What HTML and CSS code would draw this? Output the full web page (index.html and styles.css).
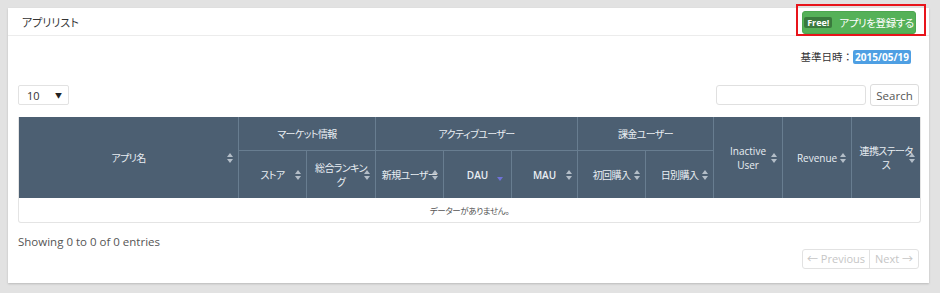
FILE: index.html
```html
<!DOCTYPE html>
<html>
  <head>
    <meta charset="UTF-8" />
    <title>アプリリスト</title>
    <link rel="stylesheet" href="styles.css">
  </head>
  <body>
    <div class="panel">
      <div class="panel_head">
        <span class="panel_title">アプリリスト</span>
        <button class="add_btn"><span class="free_badge">Free!</span><span class="jp">アプリを登録する</span></button>
        <span class="mark_box"></span>
      </div>

      <div class="panel_body">
        <div class="date_row">
          基準日時：<span class="date_label">2015/05/19</span>
        </div>

        <div class="controls">
          <div class="length_select"><span>10</span><span class="caret">▼</span></div>
          <div class="search_box">
            <input class="search_input" type="text" />
            <button class="search_btn">Search</button>
          </div>
        </div>

        <table class="app_table">
          <colgroup>
            <col style="width: 220px" />
            <col style="width: 68px" />
            <col style="width: 69px" />
            <col style="width: 68px" />
            <col style="width: 68px" />
            <col style="width: 66px" />
            <col style="width: 68px" />
            <col style="width: 68px" />
            <col style="width: 69px" />
            <col style="width: 69px" />
            <col style="width: 68px" />
          </colgroup>
          <thead>
            <tr class="row_top">
              <th rowspan="2" class="sort jp">アプリ名</th>
              <th colspan="2" class="group jp">マーケット情報</th>
              <th colspan="3" class="group jp">アクティブユーザー</th>
              <th colspan="2" class="group jp">課金ユーザー</th>
              <th rowspan="2" class="sort">Inactive<br />User</th>
              <th rowspan="2" class="sort">Revenue</th>
              <th rowspan="2" class="sort jp last">連携ステータ<br />ス</th>
            </tr>
            <tr class="row_sub">
              <th class="sort jp">ストア</th>
              <th class="sort jp">総合ランキン<br />グ</th>
              <th class="sort jp">新規ユーザー</th>
              <th class="sort_desc">DAU</th>
              <th class="sort">MAU</th>
              <th class="sort jp">初回購入</th>
              <th class="sort jp">日別購入</th>
            </tr>
          </thead>
          <tbody>
            <tr>
              <td colspan="11" class="empty jp">データーがありません。</td>
            </tr>
          </tbody>
        </table>

        <div class="table_foot">
          <div class="info">Showing 0 to 0 of 0 entries</div>
          <div class="pager">
            <span class="page_btn prev">← Previous</span>
            <span class="page_btn next">Next →</span>
          </div>
        </div>
      </div>
    </div>
  </body>
</html>
```

FILE: styles.css
```css
body {
  margin: 0;
  background: #e2e2e2;
  font-family: "Open Sans", "Noto Sans CJK JP", sans-serif;
  color: #333;
  height: 293px;
  overflow: hidden;
}

/* Japanese text: proportional kana, a little tighter */
.jp {
  font-feature-settings: "palt";
  letter-spacing: -0.4px;
}

.panel {
  margin: 8px 0 0 8px;
  width: 921px;
  height: 275px;
  background: #fff;
  box-shadow: 0 1px 2px rgba(0, 0, 0, 0.18);
  box-sizing: border-box;
}

.panel_head {
  position: relative;
  height: 28px;
  border-bottom: 1px solid #ececec;
  display: flex;
  justify-content: space-between;
  align-items: center;
  padding: 0 13px 0 14px;
  box-sizing: border-box;
}

.panel_title {
  font-size: 11px;
  color: #333;
  font-feature-settings: "palt";
}

.add_btn {
  width: 114px;
  height: 23px;
  margin-top: 1px;
  background: #55b158;
  border: 1px solid #4ca64f;
  border-radius: 3px;
  color: #fff;
  font-family: "Open Sans", "Noto Sans CJK JP", sans-serif;
  font-size: 10.5px;
  white-space: nowrap;
  display: flex;
  align-items: center;
  justify-content: center;
  gap: 7px;
  padding: 0;
}

.free_badge {
  background: #3a7a3d;
  color: #fff;
  font-weight: 700;
  font-size: 9px;
  padding: 0 3px;
  line-height: 11px;
  border-radius: 2px;
}

/* red annotation frame around the register button */
.mark_box {
  position: absolute;
  right: 3px;
  top: -4px;
  width: 130px;
  height: 32px;
  border: 2px solid #e8141b;
  box-sizing: border-box;
}

.panel_body {
  padding: 0 10px;
}

.date_row {
  text-align: right;
  padding: 15px 8px 0 0;
  font-size: 10.5px;
  line-height: 13px;
  height: 13px;
}

.date_label {
  background: #4e9fe3;
  color: #fff;
  font-weight: 700;
  font-size: 10px;
  padding: 0 2px;
  border-radius: 2px;
}

.controls {
  margin-top: 20px;
  display: flex;
  justify-content: space-between;
  align-items: center;
  height: 22px;
}

.length_select {
  width: 51px;
  height: 20px;
  border: 1px solid #e2e2e2;
  border-radius: 2px;
  box-sizing: border-box;
  display: flex;
  justify-content: space-between;
  align-items: center;
  padding: 0 6px 0 8px;
  font-size: 11px;
}

.caret {
  font-size: 7px;
  color: #222;
}

.search_box {
  display: flex;
  gap: 4px;
  align-items: center;
}

.search_input {
  width: 150px;
  height: 20px;
  border: 1px solid #e0e0e0;
  border-radius: 3px;
  box-sizing: border-box;
}

.search_btn {
  width: 49px;
  height: 22px;
  border: 1px solid #dcdcdc;
  border-radius: 3px;
  background: #fff;
  font-family: "Open Sans", sans-serif;
  font-size: 11.5px;
  color: #555;
  padding: 0;
}

.app_table {
  margin-top: 11px;
  width: 901px;
  table-layout: fixed;
  border-collapse: separate;
  border-spacing: 0;
  border: 1px solid #e4e4e4;
  border-top: none;
  border-radius: 0 0 3px 3px;
}

.app_table th {
  position: relative;
  background: #4c5f72;
  color: #e9eef3;
  font-weight: 400;
  font-size: 10px;
  line-height: 14px;
  white-space: nowrap;
  padding: 0 3px;
  text-align: center;
  border-right: 1px solid #687d90;
}

.app_table th.jp {
  letter-spacing: -0.6px;
}

.app_table th.last {
  border-right: none;
}

.row_top th {
  height: 33px;
}

.row_top th.group {
  border-bottom: 1px solid #687d90;
}

.row_sub th {
  height: 47px;
}

.app_table th.sort::before,
.app_table th.sort::after {
  content: "";
  position: absolute;
  right: 5px;
  top: 50%;
  border-left: 3px solid transparent;
  border-right: 3px solid transparent;
}

.app_table th.sort::before {
  margin-top: -5px;
  border-bottom: 4px solid #b4bec8;
}

.app_table th.sort::after {
  margin-top: 1px;
  border-top: 4px solid #b4bec8;
}

.app_table th.sort_desc::after {
  content: "";
  position: absolute;
  right: 8px;
  top: 50%;
  margin-top: 2px;
  border-left: 3px solid transparent;
  border-right: 3px solid transparent;
  border-top: 4px solid #6f72d8;
}

.row_sub th:nth-child(4),
.row_sub th:nth-child(5),
.app_table th:nth-child(10) {
  font-weight: 600;
}

.empty {
  height: 24px;
  text-align: center;
  font-size: 8.5px;
  color: #555;
  padding: 0;
}

.table_foot {
  display: flex;
  justify-content: space-between;
  align-items: flex-start;
  margin-top: 10px;
}

.info {
  font-size: 11.5px;
  line-height: 17px;
  color: #555;
}

.pager {
  margin-top: 16px;
  display: flex;
  border: 1px solid #e2e2e2;
  border-radius: 3px;
  height: 20px;
  box-sizing: border-box;
}

.page_btn {
  font-size: 11px;
  color: #c6c6c6;
  line-height: 18px;
  white-space: nowrap;
  text-align: center;
  box-sizing: border-box;
}

.prev {
  width: 66px;
}

.next {
  width: 49px;
  border-left: 1px solid #e2e2e2;
}
```
